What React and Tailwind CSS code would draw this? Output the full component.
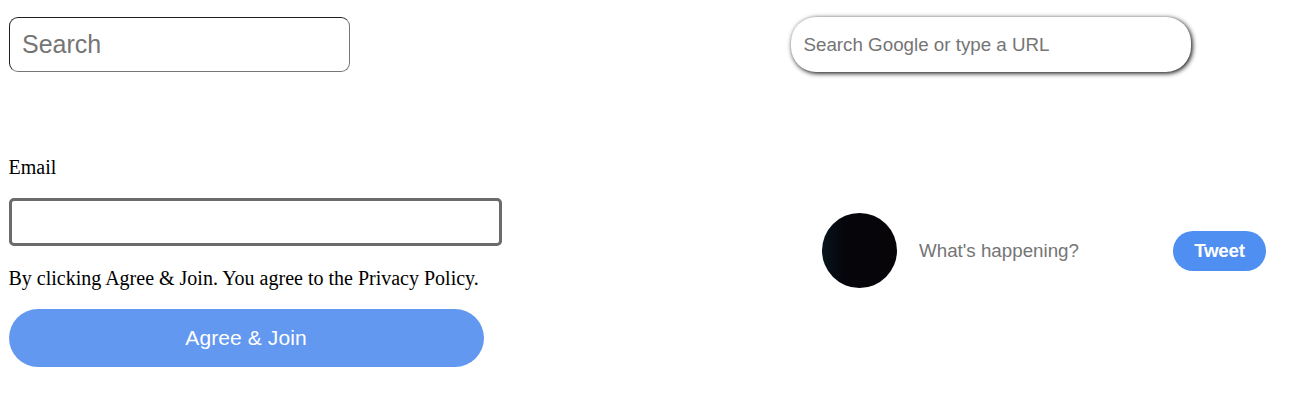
function SearchBox() {
  return (
    <input
      type="text"
      placeholder="Search"
      className="block h-[55px] w-[341px] rounded-[9px] border border-t-[#1f1f1f] border-r-[#767676] border-b-[#767676] border-l-[#1f1f1f] bg-white pl-[12px] text-[25px] text-black outline-none placeholder:text-[#757575]"
    />
  );
}

function GoogleSearch() {
  return (
    <input
      type="text"
      placeholder="Search Google or type a URL"
      className="block h-[55px] w-[400px] rounded-[25px] bg-white pl-[12.5px] text-[18.75px] text-black shadow-[1.25px_1.25px_5px_0px_#000] outline-none placeholder:text-[#757575]"
    />
  );
}

function JoinForm() {
  return (
    <form className="flex w-[493px] flex-col items-start font-['Liberation_Serif',serif] text-[20px] leading-[23px] text-black">
      <label htmlFor="email" className="-ml-[0.5px] pt-px">Email</label>
      <input
        id="email"
        type="text"
        className="mt-[19px] h-[48px] w-full rounded-[5px] border-[3px] border-[#6b6b6b] bg-white px-3 outline-none"
      />
      <p className="-ml-[0.5px] mt-[21px] whitespace-nowrap">
        By clicking Agree &amp; Join. You agree to the Privacy Policy.
      </p>
      <button
        type="button"
        className="mt-[19px] h-[58px] w-[475px] rounded-[31px] bg-[#6398f1] pr-px pb-[2px] font-['Liberation_Sans',sans-serif] text-[21px] tracking-[0.1px] text-white"
      >
        Agree &amp; Join
      </button>
    </form>
  );
}

function TweetBox() {
  return (
    <div className="flex items-center">
      <div className="size-[75px] rounded-full bg-linear-to-r from-[#06141c] via-[#05060b] via-30% to-[#080508]" />
      <input
        type="text"
        placeholder="What's happening?"
        className="ml-[22px] h-[50px] w-[254px] bg-white text-[18.75px] text-black outline-none placeholder:text-[#757575]"
      />
      <button
        type="button"
        className="h-[40px] w-[93px] rounded-[20px] bg-[#508ff2] pt-px text-[18.75px] font-bold tracking-[-0.2px] text-white"
      >
        Tweet
      </button>
    </div>
  );
}

export default function App() {
  return (
    <main className="grid h-[401px] grid-cols-[782px_1fr] grid-rows-[138px_1fr] overflow-hidden bg-white pt-[17px] pl-[9px] font-['Liberation_Sans',sans-serif]">
      <SearchBox />
      <GoogleSearch />
      <JoinForm />
      <div className="pt-[58px] pl-[31px]">
        <TweetBox />
      </div>
    </main>
  );
}
